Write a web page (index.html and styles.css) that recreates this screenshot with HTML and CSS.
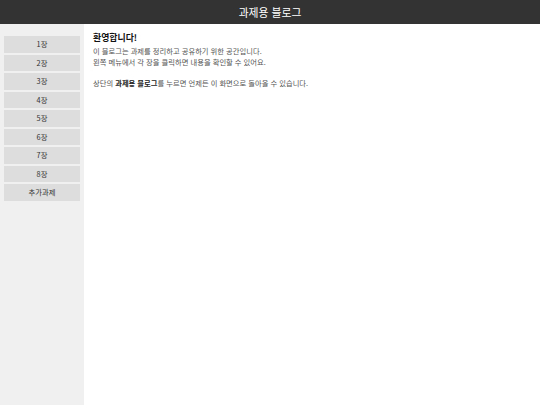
FILE: index.html
```html
<!DOCTYPE html>
<html lang="ko">
<head>
<meta charset="utf-8">
<title>과제용 블로그</title>
<link rel="stylesheet" href="styles.css">
</head>
<body>
<header class="topbar">과제용 블로그</header>
<div class="layout">
  <nav class="sidebar">
    <button class="nav-btn">1장</button>
    <button class="nav-btn">2장</button>
    <button class="nav-btn">3장</button>
    <button class="nav-btn">4장</button>
    <button class="nav-btn">5장</button>
    <button class="nav-btn">6장</button>
    <button class="nav-btn">7장</button>
    <button class="nav-btn">8장</button>
    <button class="nav-btn">추가과제</button>
  </nav>
  <main class="content">
    <h2 class="title">환영합니다!</h2>
    <p class="text">이 블로그는 과제를 정리하고 공유하기 위한 공간입니다.<br>왼쪽 메뉴에서 각 장을 클릭하면 내용을 확인할 수 있어요.</p>
    <p class="text">상단의 <strong>과제용 블로그</strong>를 누르면 언제든 이 화면으로 돌아올 수 있습니다.</p>
  </main>
</div>
</body>
</html>
```
FILE: styles.css
```css
* { box-sizing: border-box; }
html, body { margin: 0; padding: 0; height: 100%; }
body {
  font-family: "Noto Sans CJK KR", "Noto Sans", sans-serif;
  background: #fff;
  display: flex;
  flex-direction: column;
}
.topbar {
  height: 24px;
  flex: none;
  background: #333;
  color: #fff;
  font-size: 10.8px;
  line-height: 24px;
  text-align: center;
}
.layout {
  flex: 1;
  display: flex;
}
.sidebar {
  width: 84px;
  flex: none;
  background: #f0f0f0;
  padding: 12px 4px;
  display: flex;
  flex-direction: column;
  gap: 2px;
}
.nav-btn {
  height: 16.5px;
  border: none;
  background: #ddd;
  color: #333;
  font-family: inherit;
  font-size: 7.3px;
  padding: 0;
  margin: 0;
}
.content {
  flex: 1;
  padding: 8px 9px;
}
.title {
  margin: 0 0 2px;
  font-size: 8.9px;
  line-height: 12px;
  color: #111;
  font-weight: bold;
}
.text {
  margin: 0 0 10.5px;
  font-size: 7.3px;
  line-height: 10.5px;
  color: #555;
}
.text strong { color: #222; }
```
